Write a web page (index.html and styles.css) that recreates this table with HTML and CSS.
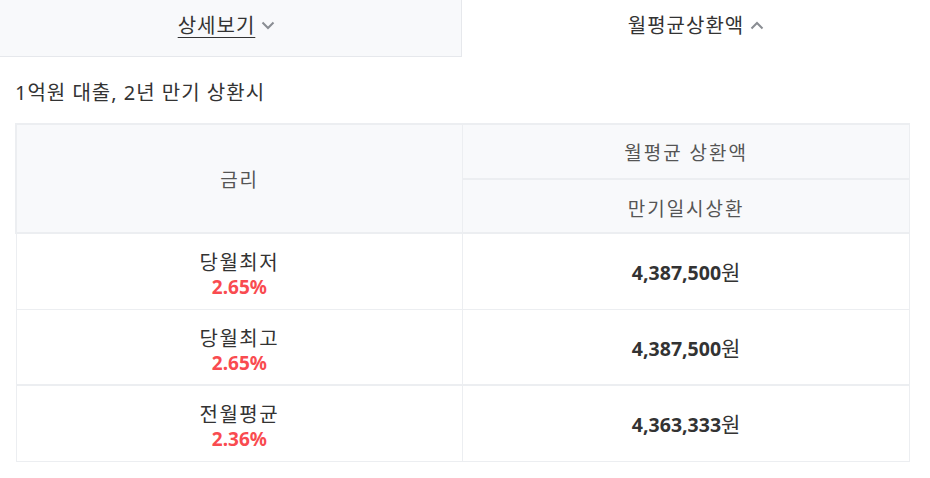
FILE: index.html
```html
<!DOCTYPE html>
<html lang="ko">
<head>
    <meta charset="UTF-8">
    <meta name="viewport" content="width=device-width, initial-scale=1.0">
    <title>월평균상환액</title>
    <link rel="stylesheet" href="styles.css">
</head>
<body>
    <div class="tabs">
        <a class="tab first" href="#">
            <span class="tab-label link">상세보기</span>
            <svg class="chev" width="14" height="9" viewBox="0 0 14 9"><path d="M1.5 1.5 L7 7 L12.5 1.5" fill="none" stroke="#8a8d93" stroke-width="2"/></svg>
        </a>
        <a class="tab active" href="#">
            <span class="tab-label">월평균상환액</span>
            <svg class="chev" width="14" height="9" viewBox="0 0 14 9"><path d="M1.5 7.5 L7 2 L12.5 7.5" fill="none" stroke="#8a8d93" stroke-width="2"/></svg>
        </a>
    </div>

    <div class="content">
        <p class="caption">1억원 대출, 2년 만기 상환시</p>
        <table class="rate-table">
            <thead>
                <tr>
                    <th rowspan="2">금리</th>
                    <th>월평균 상환액</th>
                </tr>
                <tr>
                    <th class="sub">만기일시상환</th>
                </tr>
            </thead>
            <tbody>
                <tr>
                    <td class="label">
                        <div class="name">당월최저</div>
                        <div class="rate">2.65%</div>
                    </td>
                    <td><span class="amount">4,387,500</span><span class="won">원</span></td>
                </tr>
                <tr class="thin">
                    <td class="label">
                        <div class="name">당월최고</div>
                        <div class="rate">2.65%</div>
                    </td>
                    <td><span class="amount">4,387,500</span><span class="won">원</span></td>
                </tr>
                <tr class="thick">
                    <td class="label">
                        <div class="name">전월평균</div>
                        <div class="rate">2.36%</div>
                    </td>
                    <td><span class="amount">4,363,333</span><span class="won">원</span></td>
                </tr>
            </tbody>
        </table>
    </div>
</body>
</html>
```

FILE: styles.css
```css
* {
    box-sizing: border-box;
}

body {
    margin: 0;
    background: #fff;
    color: #333;
    font-family: "Noto Sans", "Noto Sans CJK KR", sans-serif;
}

.tabs {
    display: grid;
    grid-template-columns: 462px 1fr;
    height: 57px;
}

.tab {
    display: flex;
    align-items: center;
    justify-content: center;
    gap: 6px;
    padding-bottom: 8px;
    text-decoration: none;
    color: #333;
    font-size: 20px;
    letter-spacing: 1px;
    background: #f8f9fb;
    border-right: 1px solid #e6e8ec;
    border-bottom: 1px solid #e6e8ec;
}

.tab.first {
    padding-right: 8px;
}

.tab.active {
    background: #fff;
    border: 0;
}

.link {
    text-decoration: underline;
    text-underline-offset: 4px;
    text-decoration-thickness: 1px;
}

.chev {
    margin-top: 2px;
}

.content {
    padding: 22px 20px 0 15px;
}

.caption {
    margin: 0 0 16px 0;
    font-size: 20px;
    letter-spacing: 1px;
    line-height: 28px;
    color: #333;
}

.rate-table {
    width: 100%;
    border-collapse: collapse;
    border: 1px solid #eceef1;
    table-layout: fixed;
}

.rate-table th {
    background: #f8f9fb;
    font-weight: normal;
    font-size: 19px;
    letter-spacing: 2px;
    color: #555;
    height: 55px;
    padding: 0;
    border: 1px solid #eceef1;
    border-top: 2px solid #eceef1;
}

.rate-table th[rowspan] {
    border-left: 2px solid #eceef1;
}

.rate-table th.sub {
    height: 54px;
    padding-top: 3px;
}

.rate-table td {
    text-align: center;
    height: 76px;
    border: 1px solid #eceef1;
    vertical-align: middle;
}

.rate-table td.label {
    padding-top: 8px;
}

.rate-table tbody tr:first-child td {
    border-top: 2px solid #eceef1;
}

.rate-table tr.thick td {
    border-top: 2px solid #eceef1;
}

.name {
    font-size: 20px;
    letter-spacing: 1.5px;
    line-height: 25px;
    color: #333;
}

.rate {
    font-size: 19px;
    line-height: 24px;
    font-weight: bold;
    color: #f94b50;
}

.amount {
    font-size: 19.5px;
    font-weight: bold;
    color: #333;
}

.won {
    font-size: 21px;
    color: #333;
}
```
